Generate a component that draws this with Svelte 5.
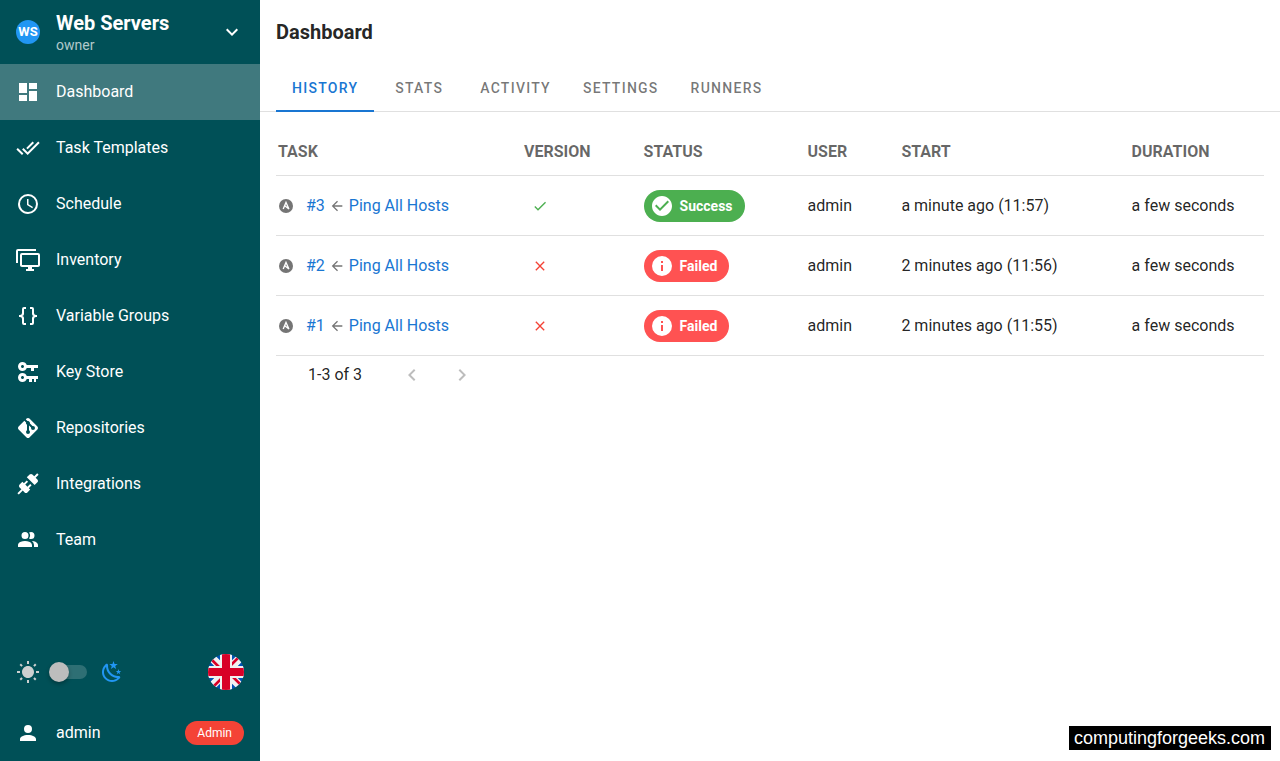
<script>
    const icons = {
        dashboard: "M13,3V9H21V3M13,21H21V11H13M3,21H11V15H3M3,13H11V3H3V13Z",
        checkAll: "M0.41,13.41L6,19L7.41,17.58L1.83,12M22.24,5.58L11.66,16.17L7.5,12L6.07,13.41L11.66,19L23.66,7M18,7L16.59,5.58L10.24,11.93L11.66,13.34L18,7Z",
        clock: "M12,20A8,8 0 0,0 20,12A8,8 0 0,0 12,4A8,8 0 0,0 4,12A8,8 0 0,0 12,20M12,2A10,10 0 0,1 22,12A10,10 0 0,1 12,22C6.47,22 2,17.5 2,12A10,10 0 0,1 12,2M12.5,7V12.25L17,14.92L16.25,16.15L11,13V7H12.5Z",
        monitors: "M22,17V7H6V17H22M22,5A2,2 0 0,1 24,7V17C24,18.11 23.1,19 22,19H16V21H18V23H10V21H12V19H6C4.89,19 4,18.11 4,17V7A2,2 0 0,1 6,5H22M2,3V15H0V3A2,2 0 0,1 2,1H20V3H2Z",
        braces: "M8,3A2,2 0 0,0 6,5V9A2,2 0 0,1 4,11H3V13H4A2,2 0 0,1 6,15V19A2,2 0 0,0 8,21H10V19H8V14A2,2 0 0,0 6,12A2,2 0 0,0 8,10V5H10V3M16,3A2,2 0 0,1 18,5V9A2,2 0 0,0 20,11H21V13H20A2,2 0 0,0 18,15V19A2,2 0 0,1 16,21H14V19H16V14A2,2 0 0,1 18,12A2,2 0 0,1 16,10V5H14V3H16Z",
        keys: "M6.5 2C8.46 2 10.13 3.25 10.74 5H22V8H18V11H15V8H10.74C10.13 9.75 8.46 11 6.5 11C4 11 2 9 2 6.5S4 2 6.5 2M6.5 5C5.67 5 5 5.67 5 6.5S5.67 8 6.5 8 8 7.33 8 6.5 7.33 5 6.5 5M6.5 13C8.46 13 10.13 14.25 10.74 16H22V19H20V22H18V19H16V22H13V19H10.74C10.13 20.75 8.46 22 6.5 22C4 22 2 20 2 17.5S4 13 6.5 13M6.5 16C5.67 16 5 16.67 5 17.5S5.67 19 6.5 19 8 18.33 8 17.5 7.33 16 6.5 16Z",
        git: "M2.6,10.59L8.38,4.8L10.07,6.5C9.83,7.35 10.22,8.28 11,8.73V14.27C10.4,14.61 10,15.26 10,16A2,2 0 0,0 12,18A2,2 0 0,0 14,16C14,15.26 13.6,14.61 13,14.27V9.41L15.07,11.5C15,11.65 15,11.82 15,12A2,2 0 0,0 17,14A2,2 0 0,0 19,12A2,2 0 0,0 17,10C16.82,10 16.65,10 16.5,10.07L13.93,7.5C14.19,6.57 13.71,5.55 12.78,5.16C12.35,5 11.9,4.96 11.5,5.07L9.8,3.38L10.59,2.6C11.37,1.81 12.63,1.81 13.41,2.6L21.4,10.59C22.19,11.37 22.19,12.63 21.4,13.41L13.41,21.4C12.63,22.19 11.37,22.19 10.59,21.4L2.6,13.41C1.81,12.63 1.81,11.37 2.6,10.59Z",
        connection: "M21.4 7.5C22.2 8.3 22.2 9.6 21.4 10.3L18.6 13.1L10.8 5.3L13.6 2.5C14.4 1.7 15.7 1.7 16.4 2.5L18.2 4.3L21.2 1.3L22.6 2.7L19.6 5.7L21.4 7.5M15.6 13.3L14.2 11.9L11.4 14.7L9.3 12.6L12.1 9.8L10.7 8.4L7.9 11.2L6.4 9.8L3.6 12.6C2.8 13.4 2.8 14.7 3.6 15.4L5.4 17.2L1.4 21.2L2.8 22.6L6.8 18.6L8.6 20.4C9.4 21.2 10.7 21.2 11.4 20.4L14.2 17.6L12.8 16.2L15.6 13.3Z",
        team: "M16 17V19H2V17S2 13 9 13 16 17 16 17M12.5 7.5A3.5 3.5 0 1 0 9 11A3.5 3.5 0 0 0 12.5 7.5M15.94 13A5.32 5.32 0 0 1 18 17V19H22V17S22 13.37 15.94 13M15 4A3.39 3.39 0 0 0 13.07 4.59A5 5 0 0 1 13.07 10.41A3.39 3.39 0 0 0 15 11A3.5 3.5 0 0 0 15 4Z",
        account: "M12,4A4,4 0 0,1 16,8A4,4 0 0,1 12,12A4,4 0 0,1 8,8A4,4 0 0,1 12,4M12,14C16.42,14 20,15.79 20,18V20H4V18C4,15.79 7.58,14 12,14Z",
        sun: "M3.55 19.09L4.96 20.5L6.76 18.71L5.34 17.29M12 6C8.69 6 6 8.69 6 12S8.69 18 12 18 18 15.31 18 12C18 8.68 15.31 6 12 6M20 13H23V11H20M17.24 18.71L19.04 20.5L20.45 19.09L18.66 17.29M20.45 5L19.04 3.6L17.24 5.39L18.66 6.81M13 1H11V4H13M6.76 5.39L4.96 3.6L3.55 5L5.34 6.81L6.76 5.39M1 13H4V11H1M13 20H11V23H13",
        night: "M17.75,4.09L15.22,6.03L16.13,9.09L13.5,7.28L10.87,9.09L11.78,6.03L9.25,4.09L12.44,4L13.5,1L14.56,4L17.75,4.09M21.25,11L19.61,12.25L20.2,14.23L18.5,13.06L16.8,14.23L17.39,12.25L15.75,11L17.81,10.95L18.5,9L19.19,10.95L21.25,11M18.97,15.95C19.8,15.87 20.69,17.05 20.16,17.8C19.84,18.25 19.5,18.67 19.08,19.07C15.17,23 8.84,23 4.94,19.07C1.03,15.17 1.03,8.83 4.94,4.93C5.34,4.53 5.76,4.17 6.21,3.85C6.96,3.32 8.14,4.21 8.06,5.04C7.79,7.9 8.75,10.87 10.95,13.06C13.14,15.26 16.1,16.22 18.97,15.95M17.33,17.97C14.5,17.81 11.7,16.64 9.53,14.5C7.36,12.31 6.2,9.5 6.04,6.68C3.23,9.82 3.34,14.64 6.35,17.66C9.37,20.67 14.19,20.78 17.33,17.97Z",
        arrowLeft: "M20,11V13H8L13.5,18.5L12.08,19.92L4.16,12L12.08,4.08L13.5,5.5L8,11H20Z",
        check: "M21,7L9,19L3.5,13.5L4.91,12.09L9,16.17L19.59,5.59L21,7Z",
        close: "M19,6.41L17.59,5L12,10.59L6.41,5L5,6.41L10.59,12L5,17.59L6.41,19L12,13.41L17.59,19L19,17.59L13.41,12L19,6.41Z",
        checkCircle: "M12 2C6.5 2 2 6.5 2 12S6.5 22 12 22 22 17.5 22 12 17.5 2 12 2M10 17L5 12L6.41 10.59L10 14.17L17.59 6.58L19 8L10 17Z",
        info: "M13,9H11V7H13M13,17H11V11H13M12,2A10,10 0 0,0 2,12A10,10 0 0,0 12,22A10,10 0 0,0 22,12A10,10 0 0,0 12,2Z",
        left: "M15.41,16.58L10.83,12L15.41,7.41L14,6L8,12L14,18L15.41,16.58Z",
        right: "M8.59,16.58L13.17,12L8.59,7.41L10,6L16,12L10,18L8.59,16.58Z",
        down: "M7.41,8.58L12,13.17L16.59,8.58L18,10L12,16L6,10L7.41,8.58Z"
    };

    const menu = [
        { title: "Dashboard", icon: "dashboard" },
        { title: "Task Templates", icon: "checkAll" },
        { title: "Schedule", icon: "clock" },
        { title: "Inventory", icon: "monitors" },
        { title: "Variable Groups", icon: "braces" },
        { title: "Key Store", icon: "keys" },
        { title: "Repositories", icon: "git" },
        { title: "Integrations", icon: "connection" },
        { title: "Team", icon: "team" }
    ];

    const tabs = ["History", "Stats", "Activity", "Settings", "Runners"];

    const tasks = [
        { id: 3, name: "Ping All Hosts", ok: true, user: "admin", start: "a minute ago (11:57)", duration: "a few seconds" },
        { id: 2, name: "Ping All Hosts", ok: false, user: "admin", start: "2 minutes ago (11:56)", duration: "a few seconds" },
        { id: 1, name: "Ping All Hosts", ok: false, user: "admin", start: "2 minutes ago (11:55)", duration: "a few seconds" }
    ];

    let page = $state("Dashboard");
    let tab = $state("History");
    let dark = $state(false);
</script>

{#snippet icon(name, size = 24)}
    <svg class="icon" width={size} height={size} viewBox="0 0 24 24" aria-hidden="true">
        <path d={icons[name]} />
    </svg>
{/snippet}

<div class="app">
    <aside class="sidebar">
        <button class="project">
            <span class="avatar">WS</span>
            <span class="project-text">
                <span class="project-name">Web Servers</span>
                <span class="project-role">owner</span>
            </span>
            {@render icon("down")}
        </button>

        <nav>
            {#each menu as item}
                <a
                    href="#{item.icon}"
                    class="nav-item"
                    class:active={page === item.title}
                    onclick={() => (page = item.title)}
                >
                    {@render icon(item.icon)}
                    <span>{item.title}</span>
                </a>
            {/each}
        </nav>

        <div class="bottom">
            <div class="theme">
                <span class="sun">{@render icon("sun")}</span>
                <input type="checkbox" class="switch" aria-label="Dark mode" bind:checked={dark} />
                <span class="moon">{@render icon("night")}</span>
                <button class="flag" aria-label="Language: English">
                    <svg width="36" height="36" viewBox="0 0 36 36">
                        <rect width="36" height="36" fill="#0052b4" />
                        <path d="M0 0L36 36M36 0L0 36" stroke="#f0f0f0" stroke-width="8" />
                        <path d="M3 5L18 20M33 31L18 16M31 3L16 18M5 33L20 18" stroke="#d80027" stroke-width="2.6" />
                        <path d="M18 0V36M0 18H36" stroke="#f0f0f0" stroke-width="12" />
                        <path d="M18 0V36M0 18H36" stroke="#d80027" stroke-width="8" />
                    </svg>
                </button>
            </div>
            <button class="nav-item user">
                {@render icon("account")}
                <span>admin</span>
                <span class="role">Admin</span>
            </button>
        </div>
    </aside>

    <main>
        <h1>Dashboard</h1>

        <div class="tabs" role="tablist">
            {#each tabs as name}
                <button role="tab" aria-selected={tab === name} class:selected={tab === name} onclick={() => (tab = name)}>
                    {name}
                </button>
            {/each}
        </div>

        <div class="content">
            <table>
                <thead>
                    <tr>
                        <th class="c-task">Task</th>
                        <th class="c-version">Version</th>
                        <th class="c-status">Status</th>
                        <th class="c-user">User</th>
                        <th class="c-start">Start</th>
                        <th>Duration</th>
                    </tr>
                </thead>
                <tbody>
                    {#each tasks as task}
                        <tr>
                            <td>
                                <div class="task">
                                    <svg class="ansible" width="16" height="16" viewBox="0 0 24 24" aria-hidden="true">
                                        <circle cx="12" cy="12" r="10.5" />
                                        <path d="M7.8 16.6L12 6.6L16.4 16.4L10.2 11.6" />
                                    </svg>
                                    <a href="#task-{task.id}">#{task.id}</a>
                                    {@render icon("arrowLeft", 16)}
                                    <a href="#template">{task.name}</a>
                                </div>
                            </td>
                            <td>
                                <div class="version" class:ok={task.ok}>
                                    {@render icon(task.ok ? "check" : "close", 16)}
                                </div>
                            </td>
                            <td>
                                <button class="chip" class:ok={task.ok}>
                                    {@render icon(task.ok ? "checkCircle" : "info")}
                                    {task.ok ? "Success" : "Failed"}
                                </button>
                            </td>
                            <td>{task.user}</td>
                            <td>{task.start}</td>
                            <td>{task.duration}</td>
                        </tr>
                    {/each}
                </tbody>
            </table>

            <div class="pager">
                <span>1-3 of 3</span>
                <button disabled aria-label="Previous page">{@render icon("left")}</button>
                <button disabled aria-label="Next page">{@render icon("right")}</button>
            </div>
        </div>
    </main>

    <div class="watermark">computingforgeeks.com</div>
</div>

<style>
    :global(body) {
        margin: 0;
    }

    .app {
        display: flex;
        min-height: 100vh;
        font-family: Roboto, sans-serif;
        font-size: 16px;
        line-height: 24px;
        color: rgba(0, 0, 0, 0.87);
        background: white;
    }

    button {
        font: inherit;
        color: inherit;
        background: none;
        border: 0;
        padding: 0;
        text-align: left;
        cursor: pointer;
    }

    a {
        color: #1976d2;
        text-decoration: none;
    }

    .icon {
        flex: none;
        display: block;
        fill: currentColor;
    }

    .sidebar {
        display: flex;
        flex-direction: column;
        flex: none;
        box-sizing: border-box;
        width: 260px;
        background: #005057;
        color: white;
    }

    .project {
        display: flex;
        align-items: center;
        height: 64px;
        padding: 0 16px;
    }

    .avatar {
        width: 24px;
        height: 24px;
        margin-right: 16px;
        border-radius: 50%;
        background: #2196f3;
        font-size: 13px;
        font-weight: 700;
        text-align: center;
    }

    .project-text {
        display: flex;
        flex-direction: column;
        flex: 1;
        padding-top: 2px;
    }

    .project-name {
        font-size: 20px;
        font-weight: 700;
    }

    .project-role {
        font-size: 14px;
        line-height: 20px;
        color: rgba(255, 255, 255, 0.7);
    }

    .nav-item {
        display: flex;
        align-items: center;
        gap: 16px;
        box-sizing: border-box;
        width: 100%;
        height: 56px;
        padding: 0 16px;
        color: white;
    }

    .nav-item.active {
        background: #40797e;
    }

    .bottom {
        margin-top: auto;
    }

    .theme {
        display: flex;
        align-items: center;
        padding: 0 16px 15px;
    }

    .sun {
        color: #ccd0d0;
    }

    .switch {
        appearance: none;
        position: relative;
        width: 36px;
        height: 14px;
        margin: 0 13px 0 11px;
        border-radius: 7px;
        background: #2e6f74;
        cursor: pointer;
    }

    .switch::before {
        content: "";
        position: absolute;
        top: -3px;
        left: -2px;
        width: 20px;
        height: 20px;
        border-radius: 50%;
        background: #bdbdbd;
        box-shadow: 0 2px 4px rgba(0, 0, 0, 0.3);
        transition: left 0.2s;
    }

    .switch:checked::before {
        left: 18px;
    }

    .moon {
        color: #2196f3;
    }

    .flag {
        width: 36px;
        height: 36px;
        margin-left: auto;
        border-radius: 50%;
        overflow: hidden;
    }

    .flag svg {
        display: block;
    }

    .role {
        margin-left: auto;
        padding: 0 12px;
        border-radius: 12px;
        background: #f44336;
        font-size: 12px;
    }

    main {
        flex: 1;
        min-width: 0;
    }

    h1 {
        margin: 0;
        padding: 20px 16px;
        font-size: 20px;
        line-height: 24px;
        font-weight: 700;
    }

    .tabs {
        display: flex;
        padding: 0 16px;
        border-bottom: 1px solid #e0e0e0;
    }

    .tabs button {
        min-width: 90px;
        height: 48px;
        margin-bottom: -1px;
        padding: 2px 16px 0;
        border-bottom: 2px solid transparent;
        font-size: 14px;
        font-weight: 500;
        letter-spacing: 0.09em;
        text-align: center;
        text-transform: uppercase;
        color: rgba(0, 0, 0, 0.54);
    }

    .tabs button.selected {
        border-color: #1976d2;
        color: #1976d2;
    }

    .content {
        padding: 16px;
    }

    table {
        width: 100%;
        border-spacing: 0;
        table-layout: fixed;
    }

    th,
    td {
        box-sizing: border-box;
        padding: 0 2px;
        text-align: left;
        border-bottom: 1px solid #e0e0e0;
        white-space: nowrap;
    }

    th {
        height: 48px;
        font-weight: 700;
        text-transform: uppercase;
        color: rgba(0, 0, 0, 0.6);
    }

    td {
        height: 60px;
    }

    .c-task { width: 24.9%; }
    .c-version { width: 12.1%; }
    .c-status { width: 16.6%; }
    .c-user { width: 9.5%; }
    .c-start { width: 23.3%; }

    .task {
        display: flex;
        align-items: center;
        gap: 4px;
        color: #757575;
    }

    .ansible {
        flex: none;
        margin-right: 8px;
    }

    .ansible circle {
        fill: #757575;
    }

    .ansible path {
        fill: none;
        stroke: white;
        stroke-width: 2;
    }

    .version {
        padding-left: 8px;
        color: #f44336;
    }

    .version.ok {
        color: #4caf50;
    }

    .chip {
        display: flex;
        align-items: center;
        gap: 6px;
        height: 32px;
        padding: 0 12px 0 6px;
        border-radius: 16px;
        background: #ff5252;
        font-size: 14px;
        font-weight: 700;
        color: white;
    }

    .chip.ok {
        background: #4caf50;
    }

    .pager {
        display: flex;
        align-items: center;
        padding: 7px 32px;
    }

    .pager button {
        margin-left: 38px;
        color: #bdbdbd;
        cursor: default;
    }

    .pager button + button {
        margin-left: 26px;
    }

    .watermark {
        position: fixed;
        right: 9px;
        bottom: 11px;
        padding: 0 6px 0 5px;
        background: black;
        color: white;
        font-family: "Liberation Sans", Arial, sans-serif;
        font-size: 18px;
        line-height: 24px;
    }
</style>
